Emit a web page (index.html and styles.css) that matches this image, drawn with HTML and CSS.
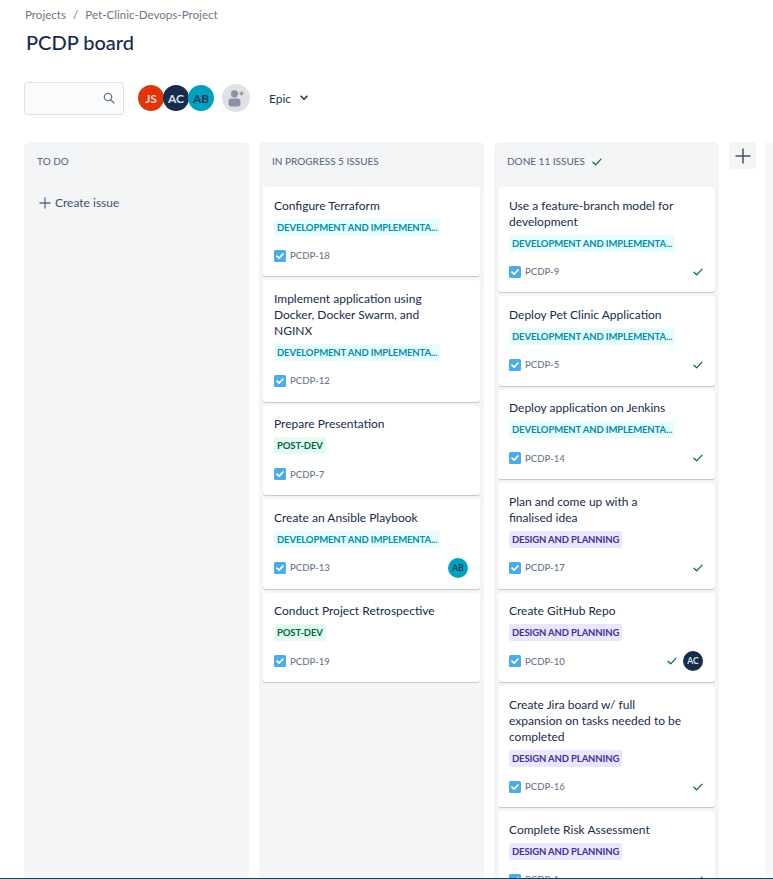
FILE: index.html
```html
<!DOCTYPE html>
<html lang="en">
<head>
<meta charset="utf-8">
<title>PCDP board</title>
<link rel="stylesheet" href="styles.css">
</head>
<body>
<svg class="defs" width="0" height="0">
  <symbol id="story" viewBox="0 0 12 12"><rect width="12" height="12" rx="1.5" fill="#4bade8"/><path d="M3 6.2 5.1 8.2 9 4" fill="none" stroke="#fff" stroke-width="1.7" stroke-linecap="round" stroke-linejoin="round"/></symbol>
  <symbol id="done" viewBox="0 0 10 8"><path d="M1 4.2 3.7 6.8 9 1.2" fill="none" stroke="#006644" stroke-width="1.2" stroke-linecap="round" stroke-linejoin="round"/></symbol>
</svg>
<div class="page">
  <nav class="crumbs"><span>Projects</span><span class="sep">/</span><span>Pet-Clinic-Devops-Project</span></nav>
  <h1 class="title">PCDP board</h1>
  <div class="toolbar">
    <div class="search">
      <svg width="12" height="12" viewBox="0 0 12 12"><circle cx="5" cy="5" r="3.7" fill="none" stroke="#6b778c" stroke-width="1.3"/><path d="M8 8l3 3" stroke="#6b778c" stroke-width="1.3" stroke-linecap="round"/></svg>
    </div>
    <div class="avatars">
      <span class="avatar js">JS</span>
      <span class="avatar ac">AC</span>
      <span class="avatar ab">AB</span>
    </div>
    <span class="add-person">
      <svg width="18" height="18" viewBox="0 0 18 18"><circle cx="7.5" cy="4.8" r="3.6" fill="#8993a4"/><rect x="1.5" y="9.5" width="12" height="8" rx="3" fill="#8993a4"/><path d="M14.5 2.5v4M12.5 4.5h4" stroke="#8993a4" stroke-width="1.4"/></svg>
    </span>
    <div class="epic">Epic
      <svg width="8" height="6" viewBox="0 0 8 6"><path d="M1 1.2 4 4.2 7 1.2" fill="none" stroke="#253858" stroke-width="1.6" stroke-linecap="round" stroke-linejoin="round"/></svg>
    </div>
  </div>
  <div class="board">
    <section class="column">
      <header class="col-head">TO DO</header>
      <div class="create"><svg width="12" height="12" viewBox="0 0 12 12"><path d="M6 .5v11M.5 6h11" stroke="#5e6c84" stroke-width="1.3"/></svg>Create issue</div>
    </section>
    <section class="column">
      <header class="col-head">IN PROGRESS 5 ISSUES</header>
      <article class="card"><p class="card-title">Configure Terraform</p><span class="tag dev">DEVELOPMENT AND IMPLEMENTA...</span><div class="card-foot"><svg class="story"><use href="#story"/></svg><span class="key">PCDP-18</span></div></article>
      <article class="card"><p class="card-title">Implement application using<br>Docker, Docker Swarm, and<br>NGINX</p><span class="tag dev">DEVELOPMENT AND IMPLEMENTA...</span><div class="card-foot"><svg class="story"><use href="#story"/></svg><span class="key">PCDP-12</span></div></article>
      <article class="card"><p class="card-title">Prepare Presentation</p><span class="tag post">POST-DEV</span><div class="card-foot"><svg class="story"><use href="#story"/></svg><span class="key">PCDP-7</span></div></article>
      <article class="card"><p class="card-title">Create an Ansible Playbook</p><span class="tag dev">DEVELOPMENT AND IMPLEMENTA...</span><div class="card-foot"><svg class="story"><use href="#story"/></svg><span class="key">PCDP-13</span><span class="avatar small ab">AB</span></div></article>
      <article class="card"><p class="card-title">Conduct Project Retrospective</p><span class="tag post">POST-DEV</span><div class="card-foot"><svg class="story"><use href="#story"/></svg><span class="key">PCDP-19</span></div></article>
    </section>
    <section class="column">
      <header class="col-head">DONE 11 ISSUES<svg class="head-check"><use href="#done"/></svg></header>
      <article class="card"><p class="card-title">Use a feature-branch model for<br>development</p><span class="tag dev">DEVELOPMENT AND IMPLEMENTA...</span><div class="card-foot"><svg class="story"><use href="#story"/></svg><span class="key">PCDP-9</span><svg class="check"><use href="#done"/></svg></div></article>
      <article class="card"><p class="card-title">Deploy Pet Clinic Application</p><span class="tag dev">DEVELOPMENT AND IMPLEMENTA...</span><div class="card-foot"><svg class="story"><use href="#story"/></svg><span class="key">PCDP-5</span><svg class="check"><use href="#done"/></svg></div></article>
      <article class="card"><p class="card-title">Deploy application on Jenkins</p><span class="tag dev">DEVELOPMENT AND IMPLEMENTA...</span><div class="card-foot"><svg class="story"><use href="#story"/></svg><span class="key">PCDP-14</span><svg class="check"><use href="#done"/></svg></div></article>
      <article class="card"><p class="card-title">Plan and come up with a<br>finalised idea</p><span class="tag design">DESIGN AND PLANNING</span><div class="card-foot"><svg class="story"><use href="#story"/></svg><span class="key">PCDP-17</span><svg class="check"><use href="#done"/></svg></div></article>
      <article class="card"><p class="card-title">Create GitHub Repo</p><span class="tag design">DESIGN AND PLANNING</span><div class="card-foot"><svg class="story"><use href="#story"/></svg><span class="key">PCDP-10</span><svg class="check"><use href="#done"/></svg><span class="avatar small ac">AC</span></div></article>
      <article class="card"><p class="card-title">Create Jira board w/ full<br>expansion on tasks needed to be<br>completed</p><span class="tag design">DESIGN AND PLANNING</span><div class="card-foot"><svg class="story"><use href="#story"/></svg><span class="key">PCDP-16</span><svg class="check"><use href="#done"/></svg></div></article>
      <article class="card"><p class="card-title">Complete Risk Assessment</p><span class="tag design">DESIGN AND PLANNING</span><div class="card-foot"><svg class="story"><use href="#story"/></svg><span class="key">PCDP-1</span><svg class="check"><use href="#done"/></svg></div></article>
    </section>
    <button class="add-col" type="button" aria-label="Add column"><svg width="16" height="16" viewBox="0 0 16 16"><path d="M8 .5v15M.5 8h15" stroke="#42526e" stroke-width="1.5"/></svg></button>
    <div class="col-edge"></div>
  </div>
  <div class="bottom-line"></div>
</div>
</body>
</html>
```

FILE: styles.css
```css
* { box-sizing: border-box; }
html, body { margin: 0; height: 100%; overflow: hidden; background: #fff; }
body { font-family: "Lato", "Noto Sans", sans-serif; color: #172b4d; }
.defs { position: absolute; }
.page { position: relative; height: 879px; overflow: hidden; padding: 7px 0 0 24px; display: flex; flex-direction: column; }
.crumbs { display: flex; gap: 7px; font-size: 11.6px; line-height: 16px; color: #6b778c; padding-left: 1px; }
.title { margin: 6px 0 0 2px; font-size: 20px; line-height: 26px; font-weight: 500; color: #172b4d; }
.toolbar { display: flex; align-items: center; margin-top: 26px; height: 34px; }
.search { width: 100px; height: 33px; border: 1px solid #dfe1e6; border-radius: 3px; background: #fafbfc; display: flex; align-items: center; justify-content: flex-end; padding-right: 8px; }
.avatars { display: flex; margin-left: 14px; }
.avatar { width: 26px; height: 26px; border-radius: 50%; display: flex; align-items: center; justify-content: center; font-size: 12px; font-weight: 700; }
.avatars .avatar { margin-right: -1px; }
.js { background: #de350b; color: #ffd2c6; }
.ac { background: #172b4d; color: #dfe1e6; }
.ab { background: #00a3bf; color: #253858; }
.add-person { width: 28px; height: 28px; margin-left: 9px; border-radius: 50%; background: #dfe1e6; display: flex; align-items: center; justify-content: center; }
.epic { margin-left: 19px; display: flex; align-items: center; gap: 9px; font-size: 12px; color: #253858; }
.board { display: flex; align-items: stretch; gap: 10px; margin-top: 27px; flex: 1; min-height: 0; }
.column { width: 225px; flex: none; background: #f4f5f7; border-radius: 5px 5px 0 0; padding: 0 4px; display: flex; flex-direction: column; gap: 4px; }
.col-head { height: 41px; padding: 12px 9px 0; display: flex; align-items: flex-start; font-size: 10px; line-height: 14px; font-weight: 500; color: #5e6c84; flex: none; white-space: nowrap; }
.head-check { width: 10px; height: 8px; margin: 4px 0 0 7px; }
.create { display: flex; align-items: center; gap: 4px; margin: 8px 0 0 11px; font-size: 12px; line-height: 16px; color: #42526e; }
.card { background: #fff; border-radius: 3px; box-shadow: 0 1px 1px #c1c7d0; padding: 10.6px 11px 8.8px; display: flex; flex-direction: column; align-items: flex-start; flex: none; }
.card-title { margin: 0; font-size: 12px; line-height: 16px; color: #172b4d; }
.tag { display: block; margin-top: 5px; height: 17px; line-height: 17px; padding: 0 3px; border-radius: 2px; font-size: 9.5px; letter-spacing: -0.12px; font-weight: 700; white-space: nowrap; }
.dev { background: #e6fcff; color: #008da6; }
.post { background: #e3fcef; color: #006644; }
.design { background: #eae6ff; color: #403294; }
.card-foot { display: flex; align-items: center; width: 100%; height: 24px; margin-top: 8px; padding-right: 1px; }
.story { width: 12px; height: 12px; margin-right: 4px; flex: none; }
.key { font-size: 9.6px; font-weight: 500; color: #6b778c; margin-right: auto; }
.check { width: 10px; height: 8px; flex: none; }
.avatar.small { width: 20px; height: 20px; font-size: 8.5px; font-weight: 700; margin-left: 6px; }
.add-col { width: 27px; height: 27px; flex: none; border: 0; padding: 0; background: #f4f5f7; border-radius: 3px; display: flex; align-items: center; justify-content: center; }
.col-edge { width: 12px; flex: none; background: #f7f8f9; margin-left: -1px; }
.bottom-line { position: absolute; left: 0; right: 0; bottom: 0; height: 1px; background: #253858; }
```
